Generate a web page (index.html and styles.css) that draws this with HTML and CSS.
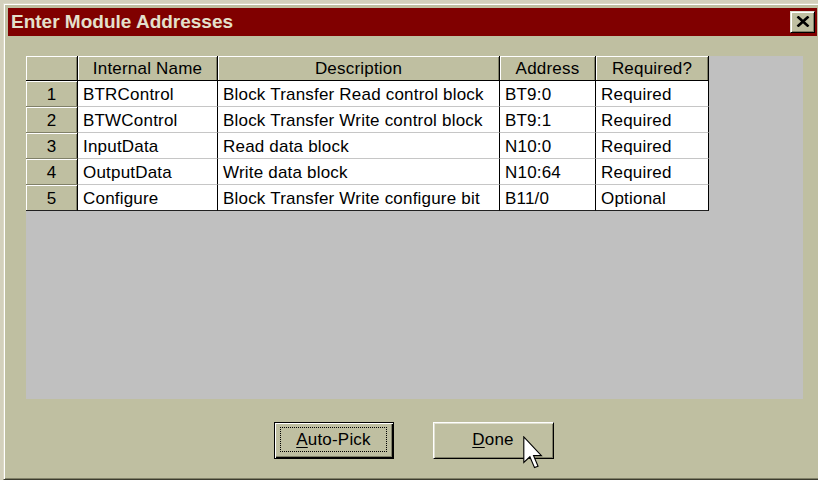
FILE: index.html
```html
<!DOCTYPE html>
<html lang="en">
<head>
<meta charset="utf-8">
<title>Enter Module Addresses</title>
<link rel="stylesheet" href="styles.css">
</head>
<body>
<div class="window">
  <div class="titlebar">
    <span class="title">Enter Module Addresses</span>
    <button class="close" aria-label="Close">
      <svg width="14" height="11" viewBox="0 0 14 11"><path d="M1.5 0.5 L12.5 10.5 M12.5 0.5 L1.5 10.5" stroke="#000" stroke-width="2.6" fill="none"/></svg>
    </button>
  </div>

  <div class="panel">
    <table class="grid">
      <colgroup>
        <col class="w-num"><col class="w-name"><col class="w-desc"><col class="w-addr"><col class="w-req">
      </colgroup>
      <thead>
        <tr><th></th><th>Internal Name</th><th>Description</th><th>Address</th><th>Required?</th></tr>
      </thead>
      <tbody>
        <tr><td class="num">1</td><td>BTRControl</td><td>Block Transfer Read control block</td><td>BT9:0</td><td>Required</td></tr>
        <tr><td class="num">2</td><td>BTWControl</td><td>Block Transfer Write control block</td><td>BT9:1</td><td>Required</td></tr>
        <tr><td class="num">3</td><td>InputData</td><td>Read data block</td><td>N10:0</td><td>Required</td></tr>
        <tr><td class="num">4</td><td>OutputData</td><td>Write data block</td><td>N10:64</td><td>Required</td></tr>
        <tr><td class="num">5</td><td>Configure</td><td>Block Transfer Write configure bit</td><td>B11/0</td><td>Optional</td></tr>
      </tbody>
    </table>
  </div>

  <div class="actions">
    <button class="btn default"><span class="focus"><u>A</u>uto-Pick</span></button>
    <button class="btn"><span class="label"><u>D</u>one</span></button>
  </div>
</div>

<svg class="cursor" width="20" height="33" viewBox="0 0 12.5 20.5">
  <polygon points="0.5,0.5 0.5,16.5 4.3,12.9 7.2,19.7 9.4,18.8 6.6,12.2 11.5,12.2" fill="#fff" stroke="#000" stroke-width="0.7" stroke-linejoin="miter"/>
</svg>
</body>
</html>
```

FILE: styles.css
```css
html, body {
  margin: 0;
  height: 100%;
  overflow: hidden;
}

body {
  background: #d3d0bc;
  font-family: "Liberation Sans", Arial, sans-serif;
  position: relative;
}

/* dialog frame */
.window {
  box-sizing: border-box;
  margin: 3px 0 0 3px;
  width: 817px;
  height: 477px;
  background: #bfbfa1;
  border-top: 1px solid #dcd9c6;
  border-left: 1px solid #dcd9c6;
  border-right: 1px solid #3c3c2e;
  border-bottom: 1px solid #3c3c2e;
  box-shadow: inset 1px 1px #fff, inset -1px -1px #808068;
  padding: 4px 2px 0 4px;
}

.titlebar {
  height: 28px;
  background: #800000;
  display: flex;
  align-items: center;
  justify-content: space-between;
  padding-left: 3px;
}

.title {
  color: #e4e0cc;
  font-weight: bold;
  font-size: 19px;
  line-height: 28px;
}

.close {
  box-sizing: border-box;
  width: 25px;
  height: 22px;
  margin-right: 2px;
  padding: 0 0 1px 0;
  background: #bfbfa1;
  border: 1px solid;
  border-color: #dfdfcf #000 #000 #dfdfcf;
  box-shadow: inset 1px 1px #fff, inset -1px -1px #808068;
  display: flex;
  align-items: center;
  justify-content: center;
}

/* grey client area holding the grid */
.panel {
  margin: 20px 0 0 18px;
  width: 777px;
  height: 343px;
  background: #c0c0c0;
}

.grid {
  border-collapse: separate;
  border-spacing: 0;
  table-layout: fixed;
  width: 683px;
  font-size: 17px;
  letter-spacing: 0.2px;
  color: #000;
}

.w-num { width: 52px; }
.w-name { width: 140px; }
.w-desc { width: 282px; }
.w-addr { width: 96px; }
.w-req { width: 113px; }

.grid th {
  box-sizing: border-box;
  height: 25px;
  padding: 2px 0 0;
  font-weight: normal;
  text-align: center;
  background: #bfbfa1;
  border-right: 1px solid #000;
  border-bottom: 1px solid #000;
  box-shadow: inset 1px 1px #fff, inset -1px 0 #808068;
}

.grid td {
  box-sizing: border-box;
  height: 26px;
  padding: 2px 4px 0 5px;
  background: #fff;
  white-space: nowrap;
  overflow: hidden;
  border-right: 1px solid #000;
  border-bottom: 1px solid #c6c6c6;
}

.grid td.num {
  padding: 2px 0 0;
  text-align: center;
  background: #bfbfa1;
  border-bottom: 1px solid #808068;
  box-shadow: inset 1px 1px #fff, inset -1px 0 #808068;
}

.grid tbody tr:last-child td {
  border-bottom: 1px solid #202020;
}

/* push buttons */
.actions {
  display: flex;
  justify-content: center;
  gap: 39px;
  margin-top: 23px;
  padding-left: 3px;
}

.btn {
  box-sizing: border-box;
  width: 121px;
  height: 37px;
  padding: 4px 6px 6px 5px;
  display: flex;
  font-family: inherit;
  font-size: 17px;
  letter-spacing: 0.2px;
  color: #000;
  background: #bfbfa1;
  border: 1px solid;
  border-color: #fff #000 #000 #fff;
  box-shadow: inset 1px 1px #dfdfcf, inset -1px -1px #808068;
}

.btn.default {
  width: 120px;
  border-color: #000;
  box-shadow: inset 1px 1px #fff, inset -1px -1px #000, inset -2px -2px #808068;
}

.focus, .label {
  flex: 1;
  display: flex;
  align-items: center;
  justify-content: center;
  padding-top: 1px;
  border: 1px dotted transparent;
}

.focus {
  border-color: #000;
}

.btn u {
  text-decoration-thickness: 1px;
  text-underline-offset: 2px;
}

.cursor {
  position: absolute;
  left: 523px;
  top: 436px;
}
```
